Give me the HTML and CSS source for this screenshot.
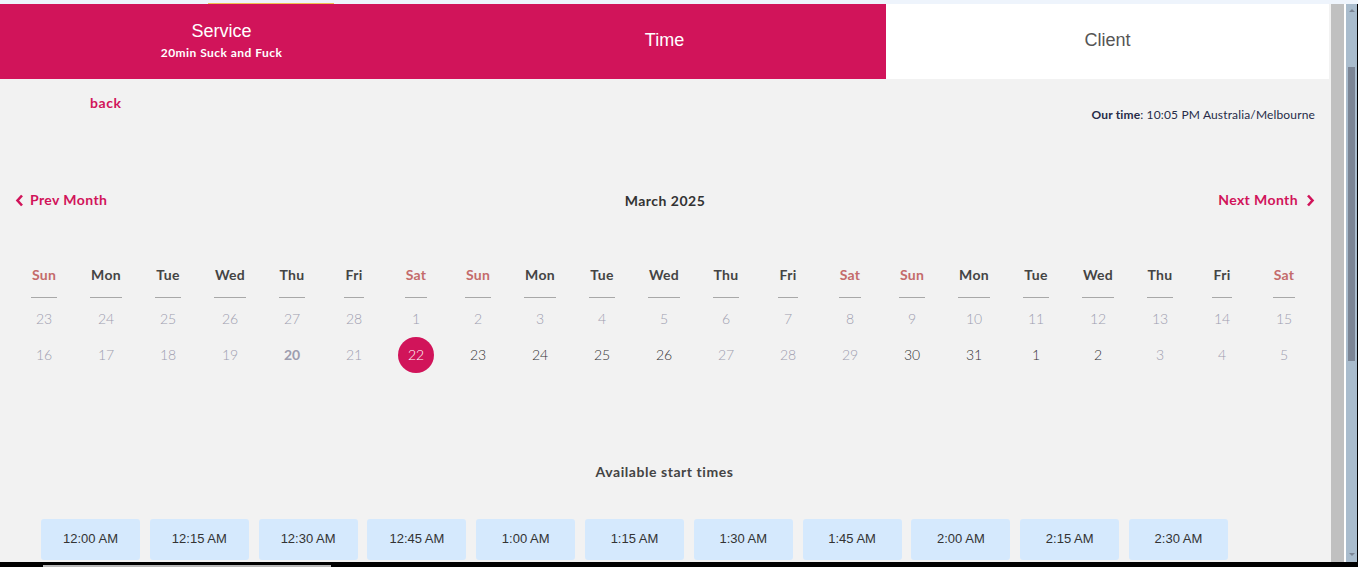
FILE: index.html
```html
<!DOCTYPE html>
<html>
<head>
<meta charset="utf-8">
<link rel="stylesheet" href="styles.css">
</head>
<body>
<div class="frame">
  <div class="topstrip"><span class="topline"></span></div>
  <div class="window">
    <div class="page">
      <header class="steps">
        <div class="step active first">
          <div class="step-title">Service</div>
          <div class="step-sub">20min Suck and Fuck</div>
        </div>
        <div class="step active"><div class="step-title">Time</div></div>
        <div class="step"><div class="step-title">Client</div></div>
      </header>

      <div class="toprow">
        <a class="back">back</a>
        <div class="ourtime"><b>Our time</b>: 10:05 PM Australia/Melbourne</div>
      </div>

      <div class="monthnav">
        <a class="navlink prev">
          <svg width="9" height="13" viewBox="0 0 9 13"><polyline points="7,1.5 2.5,6.5 7,11.5" fill="none" stroke="#d1145a" stroke-width="2.6"/></svg>
          Prev Month
        </a>
        <div class="monthtitle">March 2025</div>
        <a class="navlink next">
          Next Month
          <svg width="9" height="13" viewBox="0 0 9 13"><polyline points="2,1.5 6.5,6.5 2,11.5" fill="none" stroke="#d1145a" stroke-width="2.6"/></svg>
        </a>
      </div>

      <div class="cal">
        <div class="dh we"><span>Sun</span></div><div class="dh"><span>Mon</span></div><div class="dh"><span>Tue</span></div><div class="dh"><span>Wed</span></div><div class="dh"><span>Thu</span></div><div class="dh"><span>Fri</span></div><div class="dh we"><span>Sat</span></div>
        <div class="dh we"><span>Sun</span></div><div class="dh"><span>Mon</span></div><div class="dh"><span>Tue</span></div><div class="dh"><span>Wed</span></div><div class="dh"><span>Thu</span></div><div class="dh"><span>Fri</span></div><div class="dh we"><span>Sat</span></div>
        <div class="dh we"><span>Sun</span></div><div class="dh"><span>Mon</span></div><div class="dh"><span>Tue</span></div><div class="dh"><span>Wed</span></div><div class="dh"><span>Thu</span></div><div class="dh"><span>Fri</span></div><div class="dh we"><span>Sat</span></div>

        <div class="d off">23</div><div class="d off">24</div><div class="d off">25</div><div class="d off">26</div><div class="d off">27</div><div class="d off">28</div><div class="d off">1</div>
        <div class="d off">2</div><div class="d off">3</div><div class="d off">4</div><div class="d off">5</div><div class="d off">6</div><div class="d off">7</div><div class="d off">8</div>
        <div class="d off">9</div><div class="d off">10</div><div class="d off">11</div><div class="d off">12</div><div class="d off">13</div><div class="d off">14</div><div class="d off">15</div>

        <div class="d off">16</div><div class="d off">17</div><div class="d off">18</div><div class="d off">19</div><div class="d off today">20</div><div class="d off">21</div><div class="d sel"><span>22</span></div>
        <div class="d">23</div><div class="d">24</div><div class="d">25</div><div class="d">26</div><div class="d off">27</div><div class="d off">28</div><div class="d off">29</div>
        <div class="d">30</div><div class="d">31</div><div class="d">1</div><div class="d">2</div><div class="d off">3</div><div class="d off">4</div><div class="d off">5</div>
      </div>

      <div class="avail">Available start times</div>

      <div class="times">
        <button class="tbtn">12:00 AM</button>
        <button class="tbtn">12:15 AM</button>
        <button class="tbtn">12:30 AM</button>
        <button class="tbtn">12:45 AM</button>
        <button class="tbtn">1:00 AM</button>
        <button class="tbtn">1:15 AM</button>
        <button class="tbtn">1:30 AM</button>
        <button class="tbtn">1:45 AM</button>
        <button class="tbtn">2:00 AM</button>
        <button class="tbtn">2:15 AM</button>
        <button class="tbtn">2:30 AM</button>
      </div>
    </div>
    <div class="gap"></div>
    <div class="gutter"></div>
    <div class="gap white"></div>
    <div class="vscroll">
      <span class="arrow up"></span>
      <span class="thumb"></span>
      <span class="arrow down"></span>
    </div>
    <div class="edge"></div>
  </div>
  <div class="bottombar"><span class="hbar"></span></div>
</div>
</body>
</html>
```

FILE: styles.css
```css
* { box-sizing: border-box; }
html, body { margin: 0; padding: 0; }
body {
  width: 1358px;
  height: 567px;
  overflow: hidden;
  background: #f2f2f2;
  font-family: Lato, "Liberation Sans", sans-serif;
}
.frame { width: 1358px; height: 567px; display: flex; flex-direction: column; }

.topstrip {
  height: 4px;
  background: #eef4fc;
  position: relative;
}
.topline {
  position: absolute;
  left: 208px;
  top: 3px;
  width: 126px;
  height: 1px;
  background: #f0c050;
}

.window { flex: 1; display: flex; min-height: 0; }
.page {
  width: 1329px;
  height: 100%;
  overflow: hidden;
  background: #f2f2f2;
}
.gap { width: 2px; background: #f2f2f2; }
.gap.white { background: #ffffff; }
.gutter { width: 13px; background: #c0c0c0; }
.vscroll {
  width: 11px;
  background: #a9bccd;
  position: relative;
}
.thumb {
  position: absolute;
  left: 2px;
  top: 63px;
  width: 7px;
  height: 294px;
  background: #7b8595;
}
.arrow {
  position: absolute;
  left: 3px;
  width: 0; height: 0;
  border-left: 3px solid transparent;
  border-right: 3px solid transparent;
}
.arrow.up { top: 5px; border-bottom: 3px solid #7b8595; }
.arrow.down { bottom: 6px; border-top: 3px solid #7b8595; }
.edge { width: 1px; background: #000; }

.bottombar {
  height: 5px;
  background: #000;
  position: relative;
}
.hbar {
  position: absolute;
  left: 43px;
  top: 3px;
  width: 288px;
  height: 2px;
  background: #b9b9b9;
}

/* header steps */
.steps { display: flex; height: 75px; }
.step {
  flex: 1;
  background: #ffffff;
  color: #555555;
  display: flex;
  flex-direction: column;
  align-items: center;
  justify-content: center;
  padding-bottom: 4px;
  font-family: "Liberation Sans", Arial, sans-serif;
}
.step.active { background: #d1145a; color: #ffffff; }
.step.first { padding-bottom: 2px; }
.step-title { font-size: 18px; line-height: 22px; }
.step-sub {
  font-family: Lato, "Liberation Sans", sans-serif;
  font-weight: 700;
  font-size: 12px;
  line-height: 16px;
  letter-spacing: 0.45px;
  margin-top: 3px;
}

/* top row */
.toprow {
  display: flex;
  justify-content: space-between;
  align-items: flex-start;
  padding: 14px 14px 0 90px;
}
.back {
  color: #d1145a;
  font-weight: 700;
  font-size: 14px;
  line-height: 20px;
  letter-spacing: 0.6px;
}
.ourtime {
  margin-top: 14px;
  font-size: 12px;
  line-height: 16px;
  letter-spacing: 0.15px;
  color: #262b48;
}
.ourtime b { font-weight: 700; }

/* month nav */
.monthnav {
  display: grid;
  grid-template-columns: 1fr auto 1fr;
  align-items: center;
  margin-top: 67px;
  padding: 0 14px 0 15px;
  height: 20px;
}
.navlink {
  display: flex;
  align-items: center;
  gap: 6px;
  color: #d1145a;
  font-weight: 700;
  font-size: 14px;
  line-height: 20px;
  letter-spacing: 0.4px;
}
.navlink.next { gap: 8px; justify-self: end; }
.monthtitle {
  font-weight: 700;
  font-size: 14px;
  color: #333333;
  letter-spacing: 0.5px;
}

/* calendar */
.cal {
  display: grid;
  grid-template-columns: repeat(21, 62px);
  margin: 56px 0 0 13px;
}
.dh {
  text-align: center;
  font-weight: 700;
  font-size: 14px;
  line-height: 18px;
  color: #444444;
  margin-bottom: 3px;
  letter-spacing: 0.3px;
}
.dh span {
  display: inline-block;
  padding: 0 1px 13px;
  border-bottom: 1px solid #a8a8a8;
}
.dh.we { color: #c46b6b; }
.d {
  height: 36px;
  line-height: 36px;
  text-align: center;
  font-size: 14px;
  font-weight: 300;
  color: #333333;
  display: flex;
  justify-content: center;
  align-items: center;
}
.d.off { color: #9d9daf; }
.d.today { font-weight: 700; }
.d.sel span {
  width: 36px;
  height: 36px;
  border-radius: 50%;
  background: #d1145a;
  color: #ffffff;
  line-height: 36px;
  text-align: center;
}

/* available times */
.avail {
  margin-top: 89px;
  text-align: center;
  font-weight: 700;
  font-size: 14px;
  line-height: 20px;
  letter-spacing: 0.55px;
  color: #444444;
}
.times {
  display: flex;
  flex-wrap: wrap;
  column-gap: 9.8px;
  row-gap: 10px;
  margin-top: 37px;
  padding-left: 41px;
}
.tbtn {
  width: 99px;
  height: 41px;
  border: none;
  border-radius: 3px;
  background: #d5e9fd;
  color: #333333;
  font-family: "Liberation Sans", Arial, sans-serif;
  font-size: 13px;
  padding: 0 0 2px;
}
```
